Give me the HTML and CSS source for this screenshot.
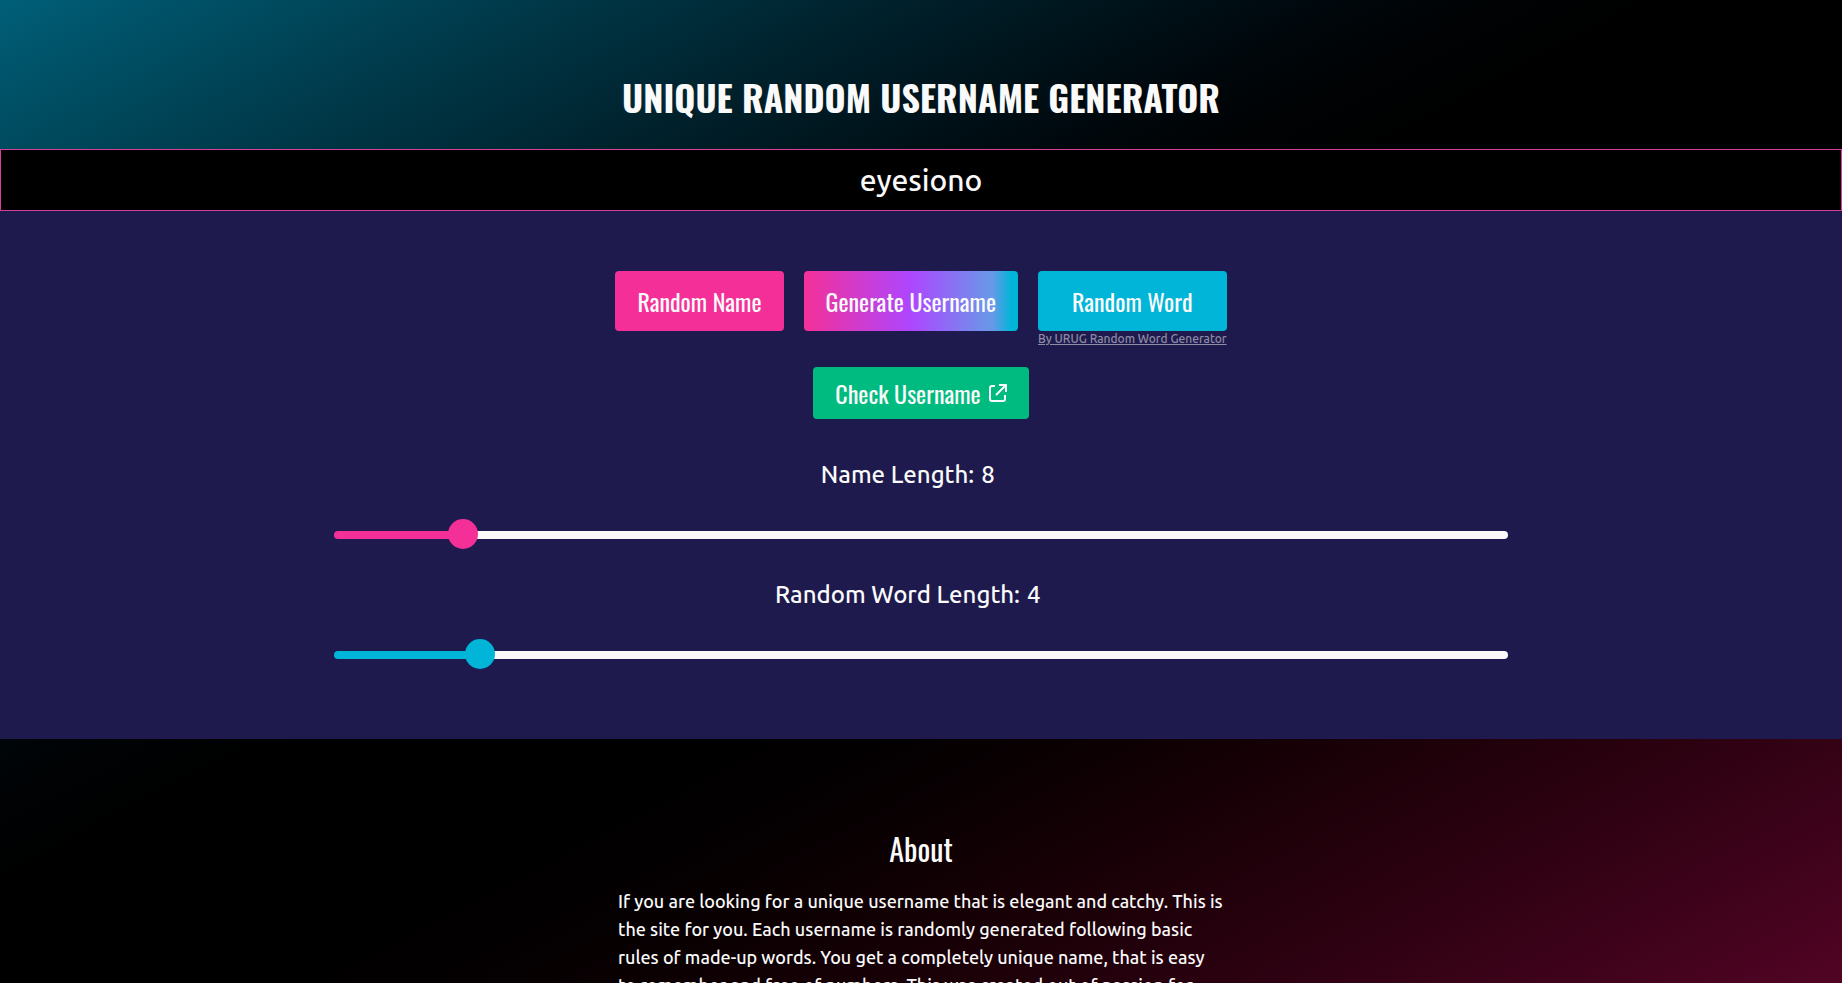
FILE: index.html
```html
<!DOCTYPE html>
<html lang="en">

<head>
  <meta charset="UTF-8">
  <meta name="viewport" content="width=device-width, initial-scale=1.0">
  <title>Unique Random Username Generator</title>
  <link rel="stylesheet" href="styles.css">
</head>

<body>
  <header>
    <h1>UNIQUE RANDOM USERNAME GENERATOR</h1>
  </header>

  <main>
    <!-- Generated username -->
    <output class="username" id="username">eyesiono</output>

    <section class="generator">
      <div class="buttons">
        <button type="button" class="btn btn-name">Random Name</button>
        <button type="button" class="btn btn-generate">Generate Username</button>
        <div class="word">
          <button type="button" class="btn btn-word">Random Word</button>
          <a href="#" class="credit">By URUG Random Word Generator</a>
        </div>
      </div>

      <a href="#" class="btn btn-check">
        Check Username
        <svg class="icon" viewBox="0 0 20 20" fill="none" stroke="currentColor" stroke-width="2" aria-hidden="true">
          <path d="M8 3H5A2 2 0 0 0 3 5V16A2 2 0 0 0 5 18H16A2 2 0 0 0 18 16V12" />
          <path d="M12 2H19V9M19 2L9 12" />
        </svg>
      </a>

      <!-- Length sliders -->
      <div class="slider">
        <label for="name-length">Name Length: <span class="value" id="name-value">8</span></label>
        <input type="range" class="range range-name" id="name-length" min="4" max="44" value="8">
      </div>
      <div class="slider">
        <label for="word-length">Random Word Length: <span class="value" id="word-value">4</span></label>
        <input type="range" class="range range-word" id="word-length" min="0" max="35" value="4">
      </div>
    </section>

    <section class="about">
      <h2>About</h2>
      <p>If you are looking for a unique username that is elegant and catchy. This is the site for you. Each username is randomly generated following basic rules of made-up words. You get a completely unique name, that is easy to remember and free of numbers. This was created out of passion for</p>
    </section>
  </main>

  <script>
    // Show the slider value next to its label
    function bindSlider(inputId, valueId) {
      const input = document.getElementById(inputId);
      const value = document.getElementById(valueId);
      input.addEventListener("input", () => {
        value.textContent = input.value;
      });
    }

    bindSlider("name-length", "name-value");
    bindSlider("word-length", "word-value");
  </script>
</body>

</html>
```

FILE: styles.css
```css
* {
  box-sizing: border-box;
  margin: 0;
}

body {
  height: 100vh;
  overflow: hidden auto;
  scrollbar-width: none;
  font-family: Ubuntu, "Noto Sans", sans-serif;
  font-weight: 500;
  color: #fafafa;
  background: linear-gradient(to bottom right in oklab, #005f78, #000 50%, #510424) fixed;
}

h1, h2, .btn {
  font-family: Oswald, "Liberation Sans Narrow", sans-serif;
}

header {
  padding: 72px 20px 27px;
  text-align: center;
}

h1 {
  font-size: 36px;
  line-height: 50px;
}

.username {
  display: block;
  padding: 12px;
  border: 1px solid #d6409a;
  background-color: #000;
  font-size: 30px;
  line-height: 36px;
  text-align: center;
}

.generator {
  display: flex;
  flex-direction: column;
  align-items: center;
  padding: 60px 20px 44px;
  background-color: #1e1a4d;
}

.buttons {
  display: flex;
  flex-wrap: wrap;
  justify-content: center;
  align-items: flex-start;
  gap: 20px;
  margin-bottom: 20px;
}

.btn {
  height: 60px;
  padding: 0 22px;
  border: none;
  border-radius: 4px;
  color: #fafafa;
  font-size: 24px;
  font-weight: 400;
  line-height: 32px;
  text-decoration: none;
  cursor: pointer;
}

.btn-name {
  background-color: #f43098;
}

.btn-generate {
  background: linear-gradient(to right, #f43098, #ad46ff 50%, #679ae8 88%, #00b5d8 97%);
}

.word {
  display: flex;
  flex-direction: column;
}

.btn-word {
  background-color: #00b5d8;
}

.credit {
  color: #8f8ca6;
  font-size: 12px;
  line-height: 16px;
}

.btn-check {
  display: flex;
  align-items: center;
  gap: 6px;
  height: 52px;
  margin-bottom: 36px;
  background-color: #00bb7f;
}

.icon {
  width: 20px;
  height: 20px;
}

.slider {
  display: flex;
  flex-direction: column;
  align-items: center;
  gap: 25px;
  width: 100%;
  max-width: 1174px;
  height: 120px;
}

.slider label {
  display: flex;
  gap: 7px;
  font-size: 24px;
  line-height: 40px;
}

.value {
  min-width: 40px;
}

.range {
  appearance: none;
  width: 100%;
  height: 30px;
  margin: 0;
  background: none;
  cursor: pointer;
}

.range::-webkit-slider-runnable-track {
  height: 8px;
  border-radius: 4px;
}

.range::-webkit-slider-thumb {
  appearance: none;
  width: 30px;
  height: 30px;
  margin-top: -12px;
  border-radius: 50%;
}

.range-name::-webkit-slider-runnable-track {
  background: linear-gradient(to right, #f43098 11%, #fafafa 11%);
}

.range-name::-webkit-slider-thumb {
  background-color: #f43098;
}

.range-word::-webkit-slider-runnable-track {
  background: linear-gradient(to right, #00b5d8 12%, #fafafa 12%);
}

.range-word::-webkit-slider-thumb {
  background-color: #00b5d8;
}

.about {
  max-width: 646px;
  margin: 0 auto;
  padding: 90px 20px;
}

h2 {
  margin-bottom: 18px;
  font-size: 30px;
  font-weight: 400;
  line-height: 40px;
  text-align: center;
}

.about p {
  font-size: 18px;
  line-height: 28px;
}
```
